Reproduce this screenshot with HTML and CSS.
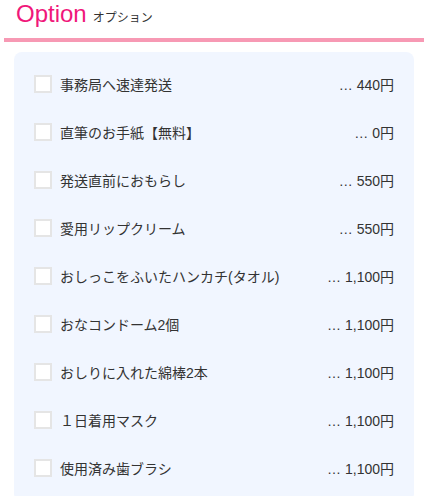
FILE: index.html
```html
<!DOCTYPE html>
<html lang="ja">
<head>
<meta charset="utf-8">
<link rel="stylesheet" href="styles.css">
</head>
<body>
<div class="wrap">
  <div class="head">
    <span class="title">Option</span><span class="sub">オプション</span>
  </div>
  <div class="panel">
    <label class="row"><span class="box"></span><span class="name">事務局へ速達発送</span><span class="price">… 440円</span></label>
    <label class="row"><span class="box"></span><span class="name">直筆のお手紙【無料】</span><span class="price">… 0円</span></label>
    <label class="row"><span class="box"></span><span class="name">発送直前におもらし</span><span class="price">… 550円</span></label>
    <label class="row"><span class="box"></span><span class="name">愛用リップクリーム</span><span class="price">… 550円</span></label>
    <label class="row"><span class="box"></span><span class="name">おしっこをふいたハンカチ(タオル)</span><span class="price">… 1,100円</span></label>
    <label class="row"><span class="box"></span><span class="name">おなコンドーム2個</span><span class="price">… 1,100円</span></label>
    <label class="row"><span class="box"></span><span class="name">おしりに入れた綿棒2本</span><span class="price">… 1,100円</span></label>
    <label class="row"><span class="box"></span><span class="name">１日着用マスク</span><span class="price">… 1,100円</span></label>
    <label class="row"><span class="box"></span><span class="name">使用済み歯ブラシ</span><span class="price">… 1,100円</span></label>
  </div>
</div>
</body>
</html>
```
FILE: styles.css
```css
html, body {
  margin: 0;
  padding: 0;
  background: #fff;
}
body {
  font-family: "Liberation Sans", "Noto Sans CJK JP", sans-serif;
  color: #333;
  overflow: hidden;
}
.wrap {
  width: 420px;
  margin-left: 4px;
}
.head {
  display: flex;
  align-items: baseline;
  padding: 0 0 10px 12px;
  border-bottom: 4px solid #f799b4;
}
.title {
  font-size: 24px;
  line-height: 28px;
  color: #f0177a;
}
.sub {
  font-size: 12px;
  margin-left: 6px;
  color: #333;
}
.panel {
  margin: 10px 10px 0;
  padding: 8px 20px 10px;
  background: #f1f6ff;
  border-radius: 8px;
}
.row {
  display: flex;
  align-items: center;
  height: 48px;
  font-size: 14px;
}
.box {
  width: 14px;
  height: 14px;
  border: 2px solid #e5e5e5;
  background: #fff;
  margin-right: 8px;
  flex: none;
}
.name {
  flex: 1;
}
.price {
  flex: none;
}
```
